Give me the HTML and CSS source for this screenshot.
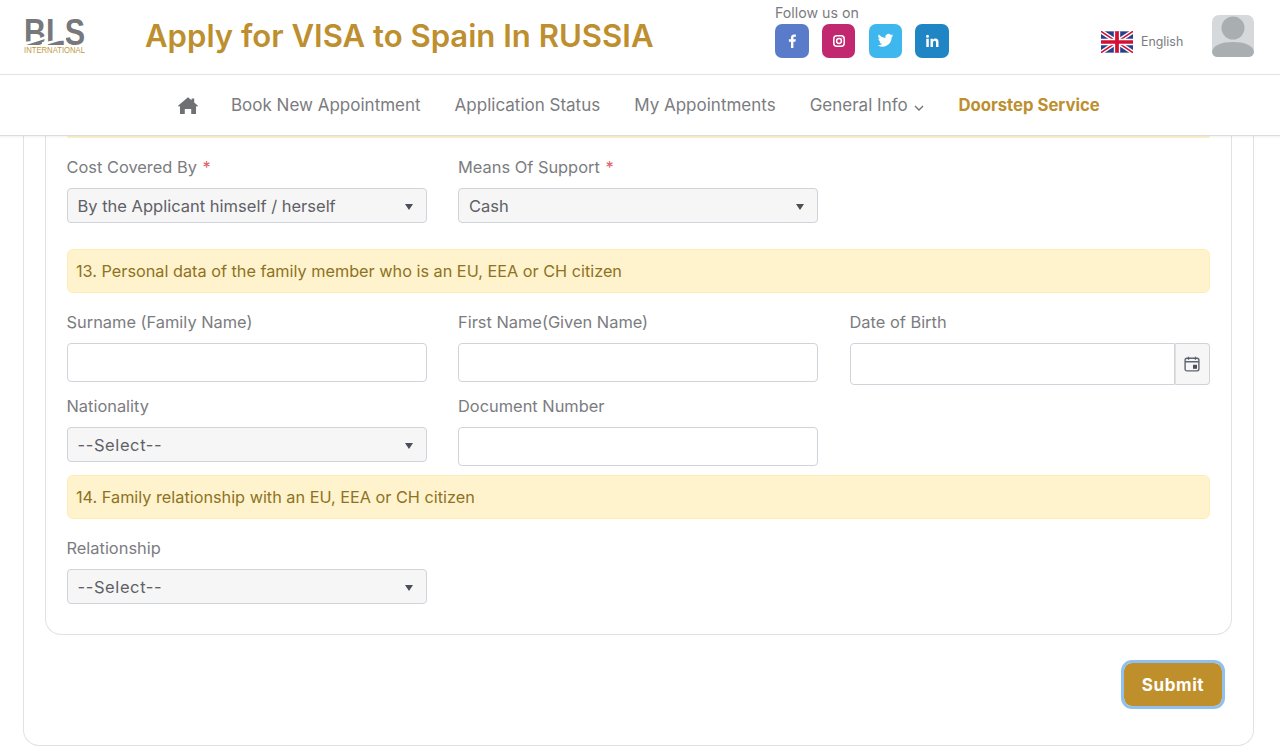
FILE: index.html
```html
<!DOCTYPE html>
<html lang="en">
<head>
<meta charset="utf-8">
<title>Apply for VISA to Spain In RUSSIA</title>
<link rel="stylesheet" href="styles.css">
</head>
<body>
<header class="site-header">
  <div class="topbar">
    <svg class="logo" viewBox="0 0 62 38" width="62" height="38" aria-label="BLS International">
      <text class="logo-main" x="0" y="27" textLength="61" lengthAdjust="spacingAndGlyphs">BLS</text>
      <path d="M-1 28 L24 20 L24 16.500 Q12 23 -1 24Z" fill="#fff"/>
      <path d="M18 28 L42 21 L42 17 Q30 24 18 24Z" fill="#fff"/>
      <text class="logo-sub" x="0" y="35" textLength="61" lengthAdjust="spacingAndGlyphs">INTERNATIONAL</text>
    </svg>
    <h1 class="page-title">Apply for VISA to Spain In RUSSIA</h1>
    <div class="follow">
      <div class="follow-label">Follow us on</div>
      <div class="social">
        <a class="soc soc-fb"><svg viewBox="0 0 16 16" width="16" height="16"><path fill="#fff" d="M9.400 15V8.700h2l.4-2.400H9.400V4.900c0-.7.3-1.200 1.300-1.200h1.200V1.500c-.4 0-1.100-.1-1.800-.1-1.900 0-3.100 1.100-3.100 3.200v1.700H4.900v2.400H7V15z"/></svg></a>
        <a class="soc soc-ig"><svg viewBox="0 0 16 16" width="16" height="16" fill="none" stroke="#fff"><rect x="2.800" y="2.800" width="10.400" height="10.400" rx="3" stroke-width="1.500"/><circle cx="8" cy="8" r="2.400" stroke-width="1.500"/><circle cx="11" cy="5" r=".6" fill="#fff" stroke="none"/></svg></a>
        <a class="soc soc-tw"><svg viewBox="0 0 24 24" width="17" height="17"><path fill="#fff" d="M23 4.900c-.8.4-1.700.6-2.600.7.900-.6 1.600-1.400 2-2.500-.9.500-1.800.9-2.900 1.100a4.500 4.500 0 0 0-7.700 4.100A12.800 12.800 0 0 1 2.500 3.600a4.500 4.500 0 0 0 1.400 6c-.7 0-1.400-.2-2-.6v.1c0 2.200 1.500 4 3.600 4.400-.7.200-1.400.2-2 .1.600 1.800 2.200 3.100 4.200 3.100A9 9 0 0 1 1 18.600 12.700 12.700 0 0 0 20.600 7.900v-.6c.9-.6 1.700-1.400 2.400-2.400z"/></svg></a>
        <a class="soc soc-in"><svg viewBox="0 0 16 16" width="16" height="16"><path fill="#fff" d="M2.300 5.800h2.500V14H2.300zM3.500 1.800a1.500 1.500 0 1 1 0 3 1.500 1.500 0 0 1 0-3zM6.500 5.800h2.400v1.100c.4-.7 1.300-1.300 2.500-1.300 2.600 0 3.100 1.700 3.100 3.900V14H12V10c0-1 0-2.200-1.300-2.200S9 8.800 9 10v4H6.500z"/></svg></a>
      </div>
    </div>
    <div class="lang">
      <svg class="flag" viewBox="0 0 60 40" width="32" height="22">
        <rect width="60" height="40" fill="#27408b"/>
        <path d="M0 0L60 40M60 0L0 40" stroke="#fff" stroke-width="8"/>
        <path d="M0 0L60 40M60 0L0 40" stroke="#d21034" stroke-width="3"/>
        <path d="M30 0V40M0 20H60" stroke="#fff" stroke-width="12"/>
        <path d="M30 0V40M0 20H60" stroke="#d21034" stroke-width="7"/>
      </svg>
      <span class="lang-name">English</span>
    </div>
    <svg class="avatar" viewBox="0 0 42 42" width="42" height="42">
      <rect width="42" height="42" rx="7" fill="#d6d9db"/>
      <circle cx="21" cy="13" r="11.500" fill="#a9aeb0"/>
      <path d="M0 37c1-7 10-10 21-10S41 30 42 37q-.5 5-6 5H6q-5.500 0-6-5z" fill="#a9aeb0"/>
    </svg>
  </div>
  <nav class="mainnav">
    <svg class="home" viewBox="0 0 20 17" width="20" height="17"><path fill="#6f7073" d="M10 .3l3.600 3V1.500h2.600v4L20 8.700l-.9 1.100-1.100-.9V16.500q0 .5-.5.500h-4.300v-5H6.800v5H2.500q-.5 0-.5-.5V8.900l-1.100.9L0 8.700z"/></svg>
    <a class="navlink">Book New Appointment</a>
    <a class="navlink">Application Status</a>
    <a class="navlink">My Appointments</a>
    <a class="navlink">General Info <svg class="caret" viewBox="0 0 10 6" width="10" height="6"><path d="M1 1l4 4 4-4" fill="none" stroke="#6f7073" stroke-width="1.300"/></svg></a>
    <a class="navlink navlink-gold">Doorstep Service</a>
  </nav>
</header>

<main class="outer-card">
  <section class="inner-card">
    <div class="alert alert-cut"></div>
    <div class="grid grid-first">
      <div class="field">
        <label class="label">Cost Covered By <span class="req">*</span></label>
        <div class="select">By the Applicant himself / herself</div>
      </div>
      <div class="field">
        <label class="label">Means Of Support <span class="req">*</span></label>
        <div class="select">Cash</div>
      </div>
    </div>
    <div class="alert alert-13">13. Personal data of the family member who is an EU, EEA or CH citizen</div>
    <div class="grid grid-person">
      <div class="field">
        <label class="label">Surname (Family Name)</label>
        <div class="input"></div>
      </div>
      <div class="field">
        <label class="label">First Name(Given Name)</label>
        <div class="input"></div>
      </div>
      <div class="field">
        <label class="label">Date of Birth</label>
        <div class="date">
          <div class="date-input"></div>
          <div class="date-btn">
            <svg viewBox="0 0 16 16" width="16" height="16" fill="none" stroke="#5f6470" stroke-width="1.400"><rect x="1.100" y="2.300" width="13.800" height="12.600" rx="1.800"/><path d="M1.100 5.800h13.800M4.500.8v3M11.500.8v3"/><rect x="9" y="8.800" width="4" height="4" fill="#4a4f5c" stroke="none"/></svg>
          </div>
        </div>
      </div>
      <div class="field">
        <label class="label">Nationality</label>
        <div class="select select-empty">--Select--</div>
      </div>
      <div class="field">
        <label class="label">Document Number</label>
        <div class="input"></div>
      </div>
    </div>
    <div class="alert alert-14">14. Family relationship with an EU, EEA or CH citizen</div>
    <div class="grid grid-last">
      <div class="field">
        <label class="label">Relationship</label>
        <div class="select select-empty">--Select--</div>
      </div>
    </div>
  </section>
  <div class="actions">
    <button class="submit" type="button">Submit</button>
  </div>
</main>
</body>
</html>
```

FILE: styles.css
```css
* { box-sizing: border-box; }
html, body { margin: 0; height: 752px; overflow: hidden; background: #fff; }
body { font-family: Inter, "Liberation Sans", sans-serif; color: #7b7c80; }

.site-header { height: 136px; background: #fff; border-bottom: 1px solid #dcdcdc; box-shadow: 0 1px 2px rgba(0,0,0,.06); position: relative; z-index: 2; }
.topbar { height: 75px; border-bottom: 1px solid #e3e3e3; display: flex; align-items: flex-start; position: relative; padding-left: 24px; }
.logo { margin-top: 18px; flex: none; overflow: visible; }
.logo-main { font: 700 36px "Liberation Sans", sans-serif; fill: #77787b; }
.logo-sub { font: 400 8.500px "Liberation Sans", sans-serif; fill: #c19a3e; }
.page-title { margin: 14px 0 0 59px; width: 630px; flex: none; font-size: 31.100px; line-height: 44px; font-weight: 600; color: #bd8f2f; white-space: nowrap; }
.follow { width: 326px; flex: none; padding-top: 4px; }
.follow-label { font-size: 14.200px; line-height: 17px; color: #7b7c80; }
.social { display: flex; gap: 13.300px; margin-top: 3px; }
.soc { width: 33.500px; height: 33.500px; border-radius: 7px; display: flex; align-items: center; justify-content: center; }
.soc-fb { background: #5a7bc9; }
.soc-ig { background: #c1286f; }
.soc-tw { background: #3eb7ee; }
.soc-in { background: #1f85c5; }
.lang { display: flex; align-items: center; gap: 8px; margin-top: 31px; width: 111px; flex: none; }
.lang-name { font-size: 12.400px; line-height: 20px; }
.avatar { margin-top: 15px; flex: none; }

.mainnav { height: 60px; display: flex; align-items: center; padding-left: 178px; gap: 34px; }
.home { flex: none; margin-right: -1px; }
.navlink { font-size: 17px; line-height: 24px; color: #7b7c80; white-space: nowrap; }
.navlink-gold { font-size: 16.700px; font-weight: 700; color: #bd8f2f; }
.caret { margin-left: 2px; }

.outer-card { margin: 0 26px 0 23px; height: 610px; border: 1px solid #e2e2e2; border-top: 0; border-radius: 0 0 16px 16px; padding: 0 21px 0 21px; }
.inner-card { height: 499px; border: 1px solid #e2e2e2; border-top: 0; border-radius: 0 0 16px 16px; padding: 0 21px 0 20.500px; }

.alert { background: #fff3cd; border: 1px solid #ffecb5; border-radius: 6px; color: #8c7223; font-size: 16.250px; line-height: 24px; padding: 9px 8.500px; height: 44px; }
.alert-cut { height: 2px; padding: 0; border-width: 0; border-radius: 0 0 6px 6px; }
.alert-13 { margin-top: 26px; }
.alert-14 { margin-top: 9px; }

.grid { display: grid; grid-template-columns: repeat(3, 360px); column-gap: 31.500px; }
.grid-first { margin-top: 17px; }
.grid-person { margin-top: 17px; row-gap: 9px; }
.grid-last { margin-top: 17px; }
.field { display: flex; flex-direction: column; }
.label { font-size: 16.400px; line-height: 24px; height: 24px; color: #7b7c80; margin-bottom: 9px; white-space: nowrap; }
.req { color: #e0606a; margin-left: 1px; }

.select { height: 35px; background: #f6f6f6; border: 1px solid #ced4da; border-radius: 4px; color: #5f6166; font-size: 16.500px; line-height: 34px; padding-left: 10px; position: relative; }
.select-empty { letter-spacing: .6px; }
.select::after { content: ""; position: absolute; right: 13px; top: 15px; border-style: solid; border-width: 6px 4.500px 0; border-color: #495057 transparent transparent; }
.input { height: 39px; background: #fff; border: 1px solid #ced4da; border-radius: 4px; }
.date { display: flex; height: 42px; }
.date-input { flex: 1; border: 1px solid #ced4da; border-radius: 4px 0 0 4px; }
.date-btn { width: 35px; background: #f6f6f6; border: 1px solid #ced4da; border-left: 1px solid #e0e0e0; border-radius: 0 4px 4px 0; display: flex; align-items: center; justify-content: center; }

.actions { display: flex; justify-content: flex-end; padding: 28px 10px 0 0; }
.submit { width: 98px; height: 43px; background: #bf8f2c; color: #fff; border: 0; border-radius: 8px; outline: 3px solid #8fc0ee; font-family: inherit; font-size: 17px; font-weight: 700; letter-spacing: .6px; padding: 0; }
```
